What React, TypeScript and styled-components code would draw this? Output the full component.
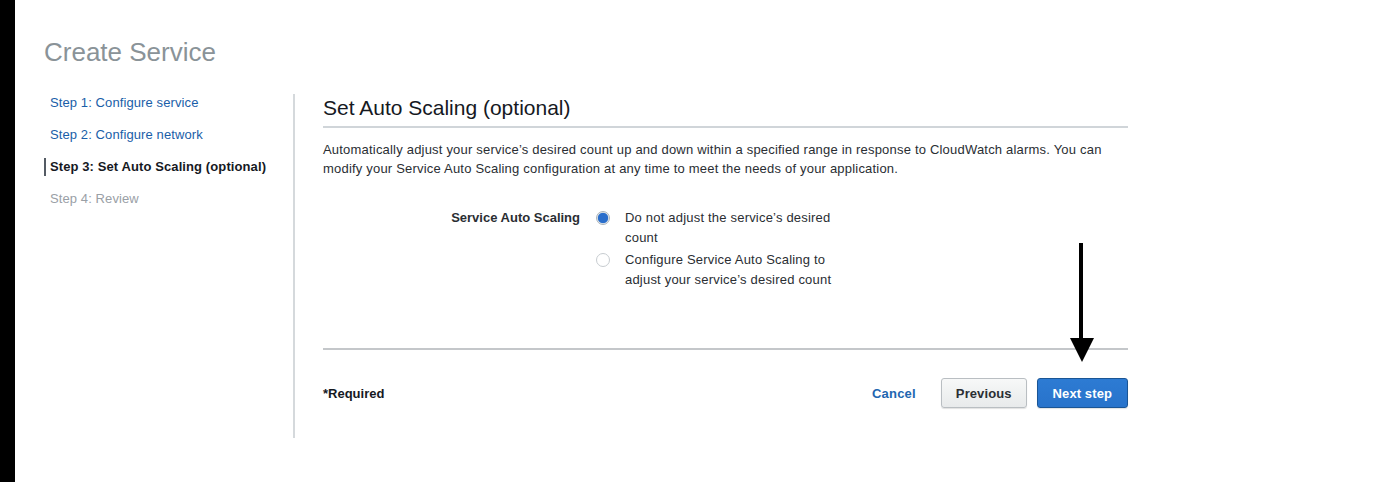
import React from "react";
import styled, { createGlobalStyle } from "styled-components";

const GlobalStyle = createGlobalStyle`
  html, body { margin: 0; padding: 0; background: #fff; }
  body { font-family: "Liberation Sans", Arial, Helvetica, sans-serif; }
  * { box-sizing: border-box; }
`;

const Screen = styled.div`
  position: relative;
  display: flex;
  width: 1400px;
  height: 482px;
  overflow: hidden;
  background: #fff;
`;

const BlackStrip = styled.div`
  width: 15px;
  flex: 0 0 15px;
  background: #000;
`;

const Page = styled.div`
  flex: 1;
  padding: 37px 0 0 29px;
  display: flex;
  flex-direction: column;
`;

const Title = styled.h1`
  margin: 0;
  font-size: 26px;
  line-height: 30px;
  font-weight: 400;
  color: #8a9398;
`;

const Body = styled.div`
  display: flex;
  margin-top: 27px;
`;

const Sidebar = styled.nav`
  width: 251px;
  height: 344px;
  border-right: 2px solid #d5d9dc;
  display: flex;
  flex-direction: column;
  gap: 14px;
`;

const StepItem = styled.div<{ $state: "link" | "active" | "disabled" }>`
  height: 18px;
  line-height: 18px;
  font-size: 13px;
  letter-spacing: 0.1px;
  padding-left: 4px;
  border-left: 2px solid ${(p) => (p.$state === "active" ? "#545b64" : "transparent")};
  font-weight: ${(p) => (p.$state === "active" ? 700 : 400)};
  color: ${(p) =>
    p.$state === "active" ? "#16191f" : p.$state === "disabled" ? "#9aa0a6" : "#1a5ea8"};
  white-space: nowrap;
`;

const Main = styled.section`
  width: 833px;
  padding-left: 28px;
  display: flex;
  flex-direction: column;
  letter-spacing: 0.2px;
`;

const Heading = styled.h2`
  margin: 2px 0 0 0;
  font-size: 21px;
  line-height: 24px;
  font-weight: 400;
  letter-spacing: 0;
  color: #16191f;
  padding-bottom: 6px;
  border-bottom: 2px solid #d0d5d9;
`;

const Description = styled.p`
  margin: 12px 0 0 0;
  font-size: 13px;
  line-height: 19px;
  color: #2a2e33;
`;

const FieldRow = styled.div`
  display: flex;
  margin-top: 30px;
  height: 142px;
  border-bottom: 2px solid #c4c7ca;
`;

const FieldLabel = styled.div`
  width: 257px;
  text-align: right;
  font-size: 13px;
  line-height: 20px;
  font-weight: 700;
  letter-spacing: 0;
  color: #2a2e33;
`;

const Options = styled.div`
  display: flex;
  flex-direction: column;
  gap: 2px;
  margin-left: 16px;
`;

const Option = styled.label`
  display: flex;
  align-items: flex-start;
  gap: 15px;
`;

const RadioDot = styled.span<{ $checked?: boolean }>`
  width: 14px;
  height: 14px;
  margin-top: 3px;
  border-radius: 50%;
  flex: 0 0 14px;
  border: 1px solid ${(p) => (p.$checked ? "#a9b3bb" : "#c7ccd0")};
  background: ${(p) =>
    p.$checked ? "radial-gradient(circle, #2a6ecb 0 4.6px, #4d86d4 5px, #e3e7ea 5.6px)" : "#fff"};
`;

const OptionText = styled.span`
  width: 214px;
  font-size: 13px;
  line-height: 20px;
  color: #2a2e33;
`;

const Footer = styled.div`
  display: flex;
  align-items: center;
  padding-top: 28px;
`;

const Required = styled.div`
  font-size: 13px;
  font-weight: 700;
  letter-spacing: 0;
  color: #16191f;
  flex: 1;
`;

const CancelLink = styled.span`
  font-size: 13px;
  font-weight: 700;
  letter-spacing: 0.2px;
  color: #2266b0;
  margin-right: 25px;
`;

const Button = styled.button<{ $primary?: boolean }>`
  height: 30px;
  padding: 0 ${(p) => (p.$primary ? 15 : 14)}px;
  font-family: "Liberation Sans", Arial, sans-serif;
  font-size: 13px;
  font-weight: 700;
  letter-spacing: 0.1px;
  border-radius: 3px;
  cursor: pointer;
  color: ${(p) => (p.$primary ? "#fff" : "#2a2e33")};
  background: ${(p) =>
    p.$primary ? "linear-gradient(#2d7bd3, #2873cb)" : "linear-gradient(#f7f8f8, #e8eaeb)"};
  border: 1px solid ${(p) => (p.$primary ? "#1a5595" : "#b9bec2")};
  box-shadow: 0 1px 1px rgba(0, 0, 0, 0.12);
  & + & {
    margin-left: 10px;
  }
`;

const Arrow = styled.svg`
  position: absolute;
  left: 1066px;
  top: 240px;
`;

export default function App() {
  return (
    <>
      <GlobalStyle />
      <Screen>
        <BlackStrip />
        <Page>
          <Title>Create Service</Title>
          <Body>
            <Sidebar>
              <StepItem $state="link">Step 1: Configure service</StepItem>
              <StepItem $state="link">Step 2: Configure network</StepItem>
              <StepItem $state="active">Step 3: Set Auto Scaling (optional)</StepItem>
              <StepItem $state="disabled">Step 4: Review</StepItem>
            </Sidebar>
            <Main>
              <Heading>Set Auto Scaling (optional)</Heading>
              <Description>
                Automatically adjust your service’s desired count up and down within a specified range in
                response to CloudWatch alarms. You can modify your Service Auto Scaling configuration at any
                time to meet the needs of your application.
              </Description>
              <FieldRow>
                <FieldLabel>Service Auto Scaling</FieldLabel>
                <Options>
                  <Option>
                    <RadioDot $checked />
                    <OptionText>Do not adjust the service’s desired count</OptionText>
                  </Option>
                  <Option>
                    <RadioDot />
                    <OptionText>Configure Service Auto Scaling to adjust your service’s desired count</OptionText>
                  </Option>
                </Options>
              </FieldRow>
              <Footer>
                <Required>*Required</Required>
                <CancelLink>Cancel</CancelLink>
                <Button>Previous</Button>
                <Button $primary>Next step</Button>
              </Footer>
            </Main>
          </Body>
        </Page>
        <Arrow width="32" height="126" viewBox="0 0 32 126">
          <rect x="13" y="3" width="4" height="100" fill="#000" />
          <polygon points="4,98 28,98 16,122" fill="#000" />
        </Arrow>
      </Screen>
    </>
  );
}
